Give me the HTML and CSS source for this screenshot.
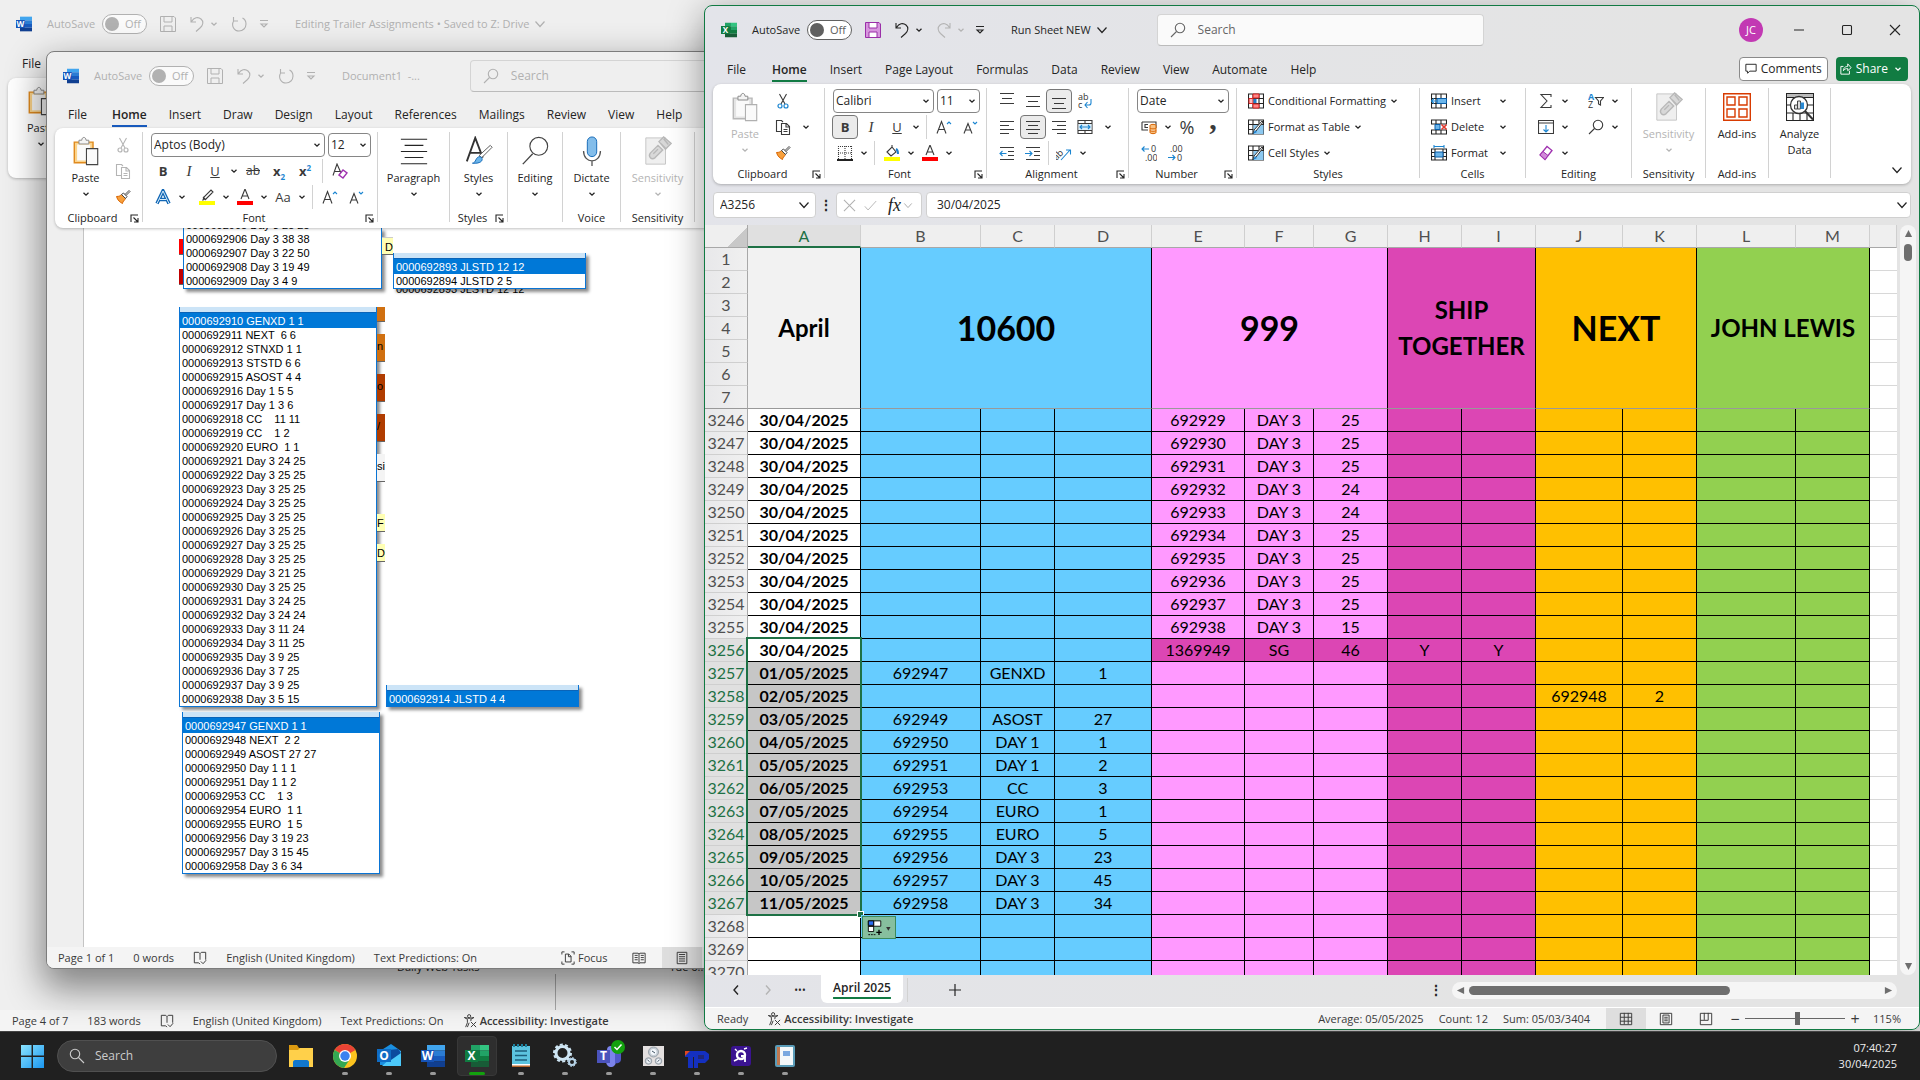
FILE: index.html
```html
<!DOCTYPE html>
<html lang="en">
<head>
<meta charset="utf-8">
<title>Run Sheet NEW - Excel</title>
<link rel="stylesheet" href="styles.css">
</head>
<body>
<svg class="sprite" aria-hidden="true">
<symbol id="chev" viewBox="0 0 8 8"><path d="M1.500 2.800 4 5.200 6.500 2.800" fill="none" stroke="currentColor" stroke-width="1.300"/></symbol>
<symbol id="bigchev" viewBox="0 0 12 12"><path d="M1.500 3.500 6 8.500 10.500 3.500" fill="none" stroke="currentColor" stroke-width="1.200"/></symbol>
<symbol id="prev" viewBox="0 0 12 12"><path d="M8 1.500 4 6l4 4.500" fill="none" stroke="currentColor" stroke-width="1.400"/></symbol>
<symbol id="next" viewBox="0 0 12 12"><path d="M4 1.500 8 6l-4 4.500" fill="none" stroke="currentColor" stroke-width="1.400"/></symbol>
<symbol id="add" viewBox="0 0 12 12"><path d="M6 0v12M0 6h12" fill="none" stroke="currentColor" stroke-width="1.200"/></symbol>
<symbol id="word" viewBox="0 0 24 24"><path d="M6 1h18v5.500H6z" fill="#41a5ee"/><path d="M6 6.500h18V12H6z" fill="#2b7cd3"/><path d="M6 12h18v5.500H6z" fill="#185abd"/><path d="M6 17.500h18V23H6z" fill="#103f91"/><path d="M0 6h13v12H0z" fill="#1654b8"/><text x="6.500" y="16" class="glyph">W</text></symbol>
<symbol id="excel" viewBox="0 0 24 24"><path d="M6 1h9v5.500H6z" fill="#21a366"/><path d="M15 1h9v5.500h-9z" fill="#33c481"/><path d="M6 6.500h9V12H6z" fill="#107c41"/><path d="M15 6.500h9V12h-9z" fill="#21a366"/><path d="M6 12h18v5.500H6z" fill="#107c41"/><path d="M6 17.500h18V23H6z" fill="#185c37"/><path d="M0 6h13v12H0z" fill="#107c41"/><text x="6.500" y="16" class="glyph">X</text></symbol>
<symbol id="save" viewBox="0 0 16 16"><path d="M.5.500h13.500L15.500 2v13.500H.5z" class="savefill"/><path d="M4 .500h8v5.500H4zM4 10h8v5.500H4z" class="savehole"/></symbol>
<symbol id="undo" viewBox="0 0 16 16"><path d="M2 1v5h5M2.500 5.500C5 1.500 9 .5 12 3s2 6-.5 8.500L7 15.500" class="ln"/></symbol>
<symbol id="redo" viewBox="0 0 16 16"><path d="M14 1v5H9M13.500 5.500C11 1.500 7 .5 4 3s-2 6 .5 8.500L9 15.500" class="ln"/></symbol>
<symbol id="repeat" viewBox="0 0 16 16"><path d="M2.500 1v4h4.500M2.800 4.800C-.2 9.500 3 15 8 15c4 0 7-3 7-7 0-2.500-1.500-5-3.500-6" class="ln"/></symbol>
<symbol id="cust" viewBox="0 0 10 10"><path d="M1 1.500h8M2 5l3 3 3-3z" class="ln"/></symbol>
<symbol id="search" viewBox="0 0 16 16"><circle cx="10" cy="6" r="4.700" class="ln"/><path d="M6.500 9.500 1 15" class="ln"/></symbol>
<symbol id="cut" viewBox="0 0 16 16"><path d="M4.500 1 10 11M11.500 1 6 11" class="ln"/><g fill="none" class="accent"><circle cx="5" cy="13" r="2"/><circle cx="11" cy="13" r="2"/></g></symbol>
<symbol id="copy" viewBox="0 0 16 16"><path d="M6 12.500H1.500V1.500h5L8 3M6.500 4.500h5l3 3v8h-8zM11 4.500v3.500h3.500M8.500 10.500h4M8.500 12.500h4" class="ln"/></symbol>
<symbol id="brush" viewBox="0 0 16 16"><path d="M1.500 7.500c3 0 4-1 5-2l4 4c-1 2-3 3-3 5-2-1-5-3-6-7z" fill="#f8a03c" stroke="#d86400"/><path d="M6.500 5.500l2-1.500 3.500 3.500-1.500 2zM10 5.500l4-4 1 1-4 4" fill="#fff" stroke="#444"/></symbol>
<symbol id="paste" viewBox="0 0 28 32"><path d="M1.500 6.500h20v22h-20z" class="pboard"/><path d="M4.500 9h14v17h-14z" fill="#fafafa"/><path d="M6.500 8.500v-4h3c0-4 4.500-4 4.500 0h3v4z" fill="#f4f4f4" stroke="#888"/><path d="M14.500 13.500h12v17h-12z" class="ppage"/></symbol>
<symbol id="launch" viewBox="0 0 9 9"><path d="M1 8V1h7M3.500 3.500 8 8M8 4v4H4" class="ln"/></symbol>
<symbol id="abottom" viewBox="0 0 16 16"><path d="M1 5.500h14M3 10.500h10M1 15.500h14" class="ln"/></symbol>
<symbol id="amid" viewBox="0 0 16 16"><path d="M1 3.500h14M3 8.500h10M1 13.500h14" class="ln"/></symbol>
<symbol id="atop" viewBox="0 0 16 16"><path d="M1 .5h14M3 5.500h10M1 10.500h14" class="ln"/></symbol>
<symbol id="aleft" viewBox="0 0 16 16"><path d="M1 2.500h14M1 6.500h9M1 10.500h14M1 14.500h9" class="ln"/></symbol>
<symbol id="acenter" viewBox="0 0 16 16"><path d="M1 2.500h14M3 6.500h10M1 10.500h14M3 14.500h10" class="ln"/></symbol>
<symbol id="aright" viewBox="0 0 16 16"><path d="M1 2.500h14M6 6.500h9M1 10.500h14M6 14.500h9" class="ln"/></symbol>
<symbol id="outd" viewBox="0 0 16 16"><path d="M1 2.500h14M9 6.500h6M9 10.500h6M1 14.500h14" class="ln"/><path d="M7.500 8.500H1M3.500 6 1 8.500 3.500 11" class="ln blue"/></symbol>
<symbol id="ind" viewBox="0 0 16 16"><path d="M1 2.500h14M9 6.500h6M9 10.500h6M1 14.500h14" class="ln"/><path d="M0 8.500h7M4.500 6 7 8.500 4.500 11" class="ln blue"/></symbol>
<symbol id="wrap" viewBox="0 0 16 16"><text x="1" y="7" class="mini">ab</text><text x="1" y="15" class="mini">c</text><path d="M14 6v4c0 1-1 2-2 2H8M10.500 9 8 12l2.500 3" class="ln blue"/></symbol>
<symbol id="merge" viewBox="0 0 16 16"><path d="M1 1.500h14v13H1zM1 4.500h14M1 11.500h14M8 1v3M8 12v3" class="ln"/><path d="M1.500 5h13v6h-13z" fill="#d9eefb"/><path d="M3 8h10M5 6 3 8l2 2M11 6l2 2-2 2" class="ln blue"/></symbol>
<symbol id="orient" viewBox="0 0 16 16"><text x="-4" y="11" transform="rotate(-45 4 8)" class="mini">ab</text><path d="M5 15 14 5M10 5h4.500v4.500" class="ln blue"/></symbol>
<symbol id="border" viewBox="0 0 16 16"><path d="M1 1.500h14M1.500 1v13M14.500 1v13M8 1v13M1 8h14" class="ln" stroke-dasharray="1 1"/><path d="M0 15h16" stroke="#222" stroke-width="2"/></symbol>
<symbol id="bucket" viewBox="0 0 16 16"><path d="M3 7l5-5 4 5-5 4zM8 2V0" class="ln"/><path d="M12 4c2 1 2 3 2 5" stroke="#1c7fcb" stroke-width="2" fill="none"/><path d="M0 12h16v4H0z" fill="#ff0"/></symbol>
<symbol id="pen" viewBox="0 0 16 16"><path d="M4 11l1-3 7-7 2 2-7 7zM4 8l3 3" class="ln"/><path d="M0 12h16v4H0z" fill="#ff0"/></symbol>
<symbol id="acolor" viewBox="0 0 16 16"><path d="M4 10 8 0l4 10M5.500 7h5" class="ln"/><path d="M0 12h16v4H0z" fill="red"/></symbol>
<symbol id="grow" viewBox="0 0 16 16"><path d="M1 14.500 5.500 2.500 10 14.500M2.500 10.500h6" class="ln"/><path d="m11 5 2-2 2 2" class="ln blue"/></symbol>
<symbol id="shrink" viewBox="0 0 16 16"><path d="M2 14.500 6 4.500l4 10M3.500 11h5" class="ln"/><path d="m11 3 2 2 2-2" class="ln blue"/></symbol>
<symbol id="clear" viewBox="0 0 16 16"><path d="M1 12.500 5 1l4 9M3 8.500h5" class="ln"/><path d="m7 12 4-5 4 3-4 5z" fill="#fff" stroke="#a033b0" stroke-width="1.400"/></symbol>
<symbol id="outlineA" viewBox="0 0 16 16"><path d="M2 14.500 8 2l6 12.500M4.500 10.500h7" fill="none" stroke="#1267b5" stroke-width="3.500"/><path d="M2 14.500 8 2l6 12.500M4.500 10.500h7" fill="none" stroke="#d9eefb" stroke-width="1"/></symbol>
<symbol id="money" viewBox="0 0 16 16"><path d="M1 3h14v6M1 3v8h6M7 5.500H4v3h3" class="ln"/><path d="M9 6.500c0-1.500 6-1.500 6 0v7c0 1.500-6 1.500-6 0zM9 9c0 1 6 1 6 0M9 11.500c0 1 6 1 6 0" fill="#f8c080" stroke="#d86400"/></symbol>
<symbol id="incdec" viewBox="0 0 16 16"><path d="M8 4H1M3.500 1.500 1 4l2.500 2.500" class="ln blue"/><text x="10" y="7" class="mini">0</text><text x="4" y="16" class="mini">.00</text></symbol>
<symbol id="decdec" viewBox="0 0 16 16"><path d="M1 12.500h7M5.500 10 8 12.500 5.500 15" class="ln blue"/><text x="3" y="7" class="mini">.00</text><text x="10" y="16" class="mini">0</text></symbol>
<symbol id="cf" viewBox="0 0 16 16"><path d="M.5 1h15v14H.5zM.5 5.500h15M.5 10.500h15M5 1v14M11 1v14" class="ln"/><path d="M5 1h6v4H5zM5 11h6v4H5z" fill="#f88" stroke="#d22"/><path d="M1 5.500h4v5H1z" fill="#fbb" stroke="#d22"/><path d="M5.500 6h3v4h-3z" fill="#1c7fcb"/></symbol>
<symbol id="ft" viewBox="0 0 16 16"><path d="M.5 1h15v14H.5zM.5 5.500h15M.5 10.500h8M5 1v14M11 1v5" class="ln"/><path d="M5.500 6h10v9h-10z" fill="#8cc8f0"/><path d="M15 3 8 12l-3 3 1-4 8-9z" fill="#fff" stroke="#333"/><path d="m5 15 2-4 2 2z" fill="#1c7fcb"/></symbol>
<symbol id="ins" viewBox="0 0 16 16"><path d="M.5 1h15v14H.5zM.5 5.500h15M.5 10.500h15M5 1v14M10 1v14" class="ln"/><path d="M6 5.500h9.500v5H6z" fill="#6bb5ea" stroke="#0a5ea8"/><path d="M6.500 8h-6M3 5.500.5 8 3 10.500" class="ln blue"/></symbol>
<symbol id="del" viewBox="0 0 16 16"><path d="M.5 1h15v4H.5zM.5 11h15v4H.5zM5 1v4M10 1v4M5 11v4M10 11v4" class="ln"/><path d="M4 5.500h5v5H4z" fill="#6bb5ea" stroke="#0a5ea8"/><path d="m10.500 5.500 5 5m0-5-5 5" stroke="#e03a30" stroke-width="1.600"/></symbol>
<symbol id="fmt" viewBox="0 0 16 16"><path d="M.5 4h15v11H.5zM.5 7.500h15M.5 11.500h15M4 4v11M12 4v11" class="ln"/><path d="M4 7h8v5H4z" fill="#6bb5ea" stroke="#0a5ea8"/><path d="M3 1.500h10M3 0v3M13 0v3" class="ln blue"/></symbol>
<symbol id="sigma" viewBox="0 0 16 16"><path d="M13 4V1.500H3L9 8l-6 6.500h10V12" class="ln"/></symbol>
<symbol id="filld" viewBox="0 0 16 16"><path d="M.5 1.500h15v13H.5zM.5 4h15" class="ln"/><path d="M8 6v7M5.500 10.500 8 13l2.500-2.500" class="ln blue"/></symbol>
<symbol id="eraser" viewBox="0 0 16 16"><path d="m2 10 7-8.500 5 4L7 14.500z" fill="#fff" stroke="#a033b0" stroke-width="1.300"/><path d="m2 10 3-3.500 5 4-3 4z" fill="#d08ad8" stroke="#a033b0"/></symbol>
<symbol id="sort" viewBox="0 0 16 16"><text x="0" y="7" class="mini az">A</text><text x="0" y="15" class="mini">Z</text><path d="M7.500 4.500h8L12.500 8v4l-2-1V8z" class="ln"/></symbol>
<symbol id="sens" viewBox="0 0 28 32"><path d="M1 2h21v28H1z" fill="#efefef" stroke="#c4c4c4"/><path d="m6 18 8-8 5 5-8 8c-4 3-8-1-5-5zM9 19l5-5M15 6l5-5 8 7-6 6zM17 8l5 5M20 3l5 6" fill="#d8d8d8" stroke="#b8b8b8" stroke-width="1.500"/></symbol>
<symbol id="addins" viewBox="0 0 28 28"><path d="M.7.700h26.600v26.600H.7zM4 4h8v8H4zM16 4h8v8h-8zM4 16h8v8H4zM16 16h8v8h-8z" fill="none" stroke="#d83b01" stroke-width="1.400"/></symbol>
<symbol id="analyze" viewBox="0 0 28 28"><path d="M.5.500h27v27H.5zM.5 4.500h27M.5 12h27M.5 20h27M7 20v8M14 20v8M21 20v8" class="ln"/><path d="M1 1h26v3H1z" fill="#bbb"/><circle cx="13" cy="12" r="8.500" fill="#fff" stroke="#333" stroke-width="1.300"/><path d="m19 18 8 8.500" stroke="#333" stroke-width="2"/><path d="M8.500 12h3v4h-3zM11.500 8h3v8h-3z" fill="#ddd" stroke="#444"/><path d="M14.500 9.500H18V16h-3.500z" fill="#2a8ad4"/></symbol>
<symbol id="para" viewBox="0 0 28 32"><path d="M0 3.500h28M4 10h20M0 16.500h28M4 23h20M0 29.500h28" class="ln"/></symbol>
<symbol id="styles" viewBox="0 0 28 32"><path d="M1 27 10 2l8 21M4 18h12" fill="none" stroke="#333" stroke-width="2"/><path d="M28 12 17 23l-3-2L26 10z" fill="#fff" stroke="#555"/><path d="M7 29c4 0 3-7 8-7 4 1 4 8-8 7z" fill="#6bb5ea" stroke="#1267b5"/></symbol>
<symbol id="find" viewBox="0 0 28 32"><circle cx="18" cy="11" r="9.500" fill="none" stroke="#444" stroke-width="1.200"/><path d="M11.500 19 1 30" stroke="#444" stroke-width="1.400"/></symbol>
<symbol id="mic" viewBox="0 0 28 32"><rect x="9" y="1" width="10" height="21" rx="5" fill="#83bdea" stroke="#1267b5"/><path d="M5 16c0 14 18 14 18 0M14 27v5" fill="none" stroke="#555" stroke-width="1.400"/></symbol>
<symbol id="book" viewBox="0 0 16 16"><path d="M8 3 6.500 1.500H1.500v12h5L8 15M8 3v7M8 3l1.500-1.500h5V10M9 12l2.500 2.500L15 10.500" class="ln"/></symbol>
<symbol id="acc" viewBox="0 0 16 16"><circle cx="7" cy="2.500" r="1.800" class="ln"/><path d="M1.500 4 5 6v4l-2 5M12.500 4 9 6v2M1.500 4 7 5l5.500-1M7 10l-2 5M9 9l6 6m0-6-6 6" class="ln"/></symbol>
<symbol id="focus" viewBox="0 0 16 16"><path d="M1 4V1h3M12 1h3v3M15 12v3h-3M4 15H1v-3M5 3.500h4L11.500 6v6.500H5zM8.500 3.500V6.500h3" class="ln"/></symbol>
<symbol id="read" viewBox="0 0 16 16"><path d="M1 2.500h6l1 1 1-1h6v11H9l-1 1-1-1H1zM8 3v11M3 5h3.500M3 7.500h3.500M3 10h3.500M10 5h3.500M10 7.500h3.500M10 10h3.500" class="ln"/></symbol>
<symbol id="page" viewBox="0 0 16 16"><path d="M2.500 1.500h11v13h-11zM4.500 4h7M4.500 6.500h7M4.500 9h7M4.500 11.500h7" class="ln"/></symbol>
<symbol id="gridv" viewBox="0 0 16 16"><path d="M1.500 1.500h13v13h-13zM1.500 6h13M1.500 10.500h13M6 1v13M10.500 1v13" class="ln"/></symbol>
<symbol id="pagev" viewBox="0 0 16 16"><path d="M1.500 1.500h13v13h-13zM4.500 3.500h7v9h-7zM6 6h4M6 8h4M6 10h4" class="ln"/></symbol>
<symbol id="breakv" viewBox="0 0 16 16"><path d="M1.500 1.500h13v13h-13zM6 1v8M1.500 9.500h9V1" class="ln"/></symbol>
<symbol id="tri" viewBox="0 0 10 10"><path d="m5 1 4 8H1z" fill="#6e6e6e"/></symbol>
<symbol id="comment" viewBox="0 0 14 14"><path d="M1 1.500h12v8H5.500L3 12V9.500H1z" class="ln"/></symbol>
<symbol id="share" viewBox="0 0 14 14"><path d="M4 4H1v9h10V9M4 9c0-4 3-5 5-5V1l4 4.500L9 9V6.500C7 6.500 5 7 4 9z" class="ln"/></symbol>
</svg>

<main class="desktop">

<section class="window word back">
  <header class="title">
    <svg class="app"><use href="#word"/></svg>
    <span class="auto">AutoSave</span><label class="toggle"><input type="checkbox" aria-label="AutoSave"><span>Off</span></label>
    <button class="q" aria-label="Save"><svg><use href="#save"/></svg></button><button class="q" aria-label="Undo"><svg><use href="#undo"/></svg></button><svg class="cv"><use href="#chev"/></svg><button class="q" aria-label="Repeat"><svg><use href="#repeat"/></svg></button><svg class="cust"><use href="#cust"/></svg>
    <span class="docname">Editing Trailer Assignments • Saved to Z: Drive</span><svg class="cv big"><use href="#bigchev"/></svg>
  </header>
  <nav class="tabs"><a href="#">File</a></nav>
  <div class="ribbon">
    <div class="group g88"><div class="body"><button class="large"><svg><use href="#paste"/></svg><span>Paste</span><svg class="cv"><use href="#chev"/></svg></button></div></div>
  </div>
  <div class="backdoc"><p><span>Daily Web Tasks</span><span>Tue 6..</span></p><div class="cells"><i></i></div></div>
  <footer class="status"><span>Page 4 of 7</span><span>183 words</span><svg><use href="#book"/></svg><span>English (United Kingdom)</span><span>Text Predictions: On</span><span class="access"><svg><use href="#acc"/></svg><b>Accessibility: Investigate</b></span></footer>
</section>

<section class="window word front">
  <header class="title">
    <svg class="app"><use href="#word"/></svg>
    <span class="auto">AutoSave</span><label class="toggle"><input type="checkbox" aria-label="AutoSave"><span>Off</span></label>
    <button class="q" aria-label="Save"><svg><use href="#save"/></svg></button><button class="q" aria-label="Undo"><svg><use href="#undo"/></svg></button><svg class="cv"><use href="#chev"/></svg><button class="q" aria-label="Repeat"><svg><use href="#repeat"/></svg></button><svg class="cust"><use href="#cust"/></svg>
    <span class="docname">Document1&nbsp; -...</span>
    <label class="searchbox"><svg><use href="#search"/></svg><input type="text" placeholder="Search" aria-label="Search"></label>
  </header>
  <nav class="tabs"><a href="#">File</a><a href="#" class="on">Home</a><a href="#">Insert</a><a href="#">Draw</a><a href="#">Design</a><a href="#">Layout</a><a href="#">References</a><a href="#">Mailings</a><a href="#">Review</a><a href="#">View</a><a href="#">Help</a></nav>
  <div class="ribbon">
    <div class="group g88"><div class="body"><button class="large"><svg><use href="#paste"/></svg><span>Paste</span><svg class="cv"><use href="#chev"/></svg></button>
      <div class="stack"><button class="i dim" aria-label="Cut"><svg><use href="#cut"/></svg></button><button class="i dim" aria-label="Copy"><svg><use href="#copy"/></svg></button><button class="i" aria-label="Format Painter"><svg><use href="#brush"/></svg></button></div></div>
      <div class="label launchable"><span>Clipboard</span><svg><use href="#launch"/></svg></div></div>
    <div class="group g235 pad"><div class="rows">
      <div class="row"><span class="combo w174"><select aria-label="Font"><option>Aptos (Body)</option></select><svg><use href="#chev"/></svg></span><span class="combo w43"><select aria-label="Font size"><option>12</option></select><svg><use href="#chev"/></svg></span></div>
      <div class="row"><button class="i"><b>B</b></button><button class="i"><em>I</em></button><button class="i"><u>U</u></button><svg class="cv"><use href="#chev"/></svg><button class="i"><s>ab</s></button><button class="i"><b>x<sub>2</sub></b></button><button class="i"><b>x<sup>2</sup></b></button><i class="sep"></i><button class="i" aria-label="Clear formatting"><svg><use href="#clear"/></svg></button></div>
      <div class="row"><button class="i" aria-label="Text effects"><svg><use href="#outlineA"/></svg></button><svg class="cv"><use href="#chev"/></svg><button class="i nudge" aria-label="Highlight"><svg><use href="#pen"/></svg></button><svg class="cv"><use href="#chev"/></svg><button class="i" aria-label="Font colour"><svg><use href="#acolor"/></svg></button><svg class="cv"><use href="#chev"/></svg><button class="i">Aa</button><svg class="cv"><use href="#chev"/></svg><i class="sep"></i><button class="i" aria-label="Grow font"><svg><use href="#grow"/></svg></button><button class="i" aria-label="Shrink font"><svg><use href="#shrink"/></svg></button></div></div>
      <div class="label launchable"><span>Font</span><svg><use href="#launch"/></svg></div></div>
    <div class="group g72"><div class="body"><button class="large"><svg><use href="#para"/></svg><span>Paragraph</span><svg class="cv"><use href="#chev"/></svg></button></div></div>
    <div class="group g58"><div class="body"><button class="large"><svg><use href="#styles"/></svg><span>Styles</span><svg class="cv"><use href="#chev"/></svg></button></div><div class="label launchable"><span>Styles</span><svg><use href="#launch"/></svg></div></div>
    <div class="group g55"><div class="body"><button class="large"><svg><use href="#find"/></svg><span>Editing</span><svg class="cv"><use href="#chev"/></svg></button></div></div>
    <div class="group g58"><div class="body"><button class="large"><svg><use href="#mic"/></svg><span>Dictate</span><svg class="cv"><use href="#chev"/></svg></button></div><div class="label">Voice</div></div>
    <div class="group g74"><div class="body"><button class="large dim" disabled><svg><use href="#sens"/></svg><span>Sensitivity</span><svg class="cv"><use href="#chev"/></svg></button></div><div class="label">Sensitivity</div></div>
  </div>
  <div class="document"><article class="sheetpage">
    <div class="line first">
      <div class="clip reds"><i></i><i></i></div>
      <ul class="list open"><li>0000692905 Day 3 25 25</li><li>0000692906 Day 3 38 38</li><li>0000692907 Day 3 22 50</li><li>0000692908 Day 3 19 49</li><li>0000692909 Day 3 4 9</li></ul>
      <div class="clip dtag"><i>D</i></div>
      <div class="beside"><ul class="list stub"><li class="sel">0000692893 JLSTD 12 12</li><li>0000692894 JLSTD 2 5</li></ul><p class="under">0000692893 JLSTD 12 12</p></div>
    </div>
    <div class="line second">
      <ul class="list stub"><li class="sel">0000692910 GENXD 1 1</li><li>0000692911 NEXT  6 6</li><li>0000692912 STNXD 1 1</li><li>0000692913 STSTD 6 6</li><li>0000692915 ASOST 4 4</li><li>0000692916 Day 1 5 5</li><li>0000692917 Day 1 3 6</li><li>0000692918 CC    11 11</li><li>0000692919 CC    1 2</li><li>0000692920 EURO  1 1</li><li>0000692921 Day 3 24 25</li><li>0000692922 Day 3 25 25</li><li>0000692923 Day 3 25 25</li><li>0000692924 Day 3 25 25</li><li>0000692925 Day 3 25 25</li><li>0000692926 Day 3 25 25</li><li>0000692927 Day 3 25 25</li><li>0000692928 Day 3 25 25</li><li>0000692929 Day 3 21 25</li><li>0000692930 Day 3 25 25</li><li>0000692931 Day 3 24 25</li><li>0000692932 Day 3 24 24</li><li>0000692933 Day 3 11 24</li><li>0000692934 Day 3 11 25</li><li>0000692935 Day 3 9 25</li><li>0000692936 Day 3 7 25</li><li>0000692937 Day 3 9 25</li><li>0000692938 Day 3 5 15</li></ul>
      <div class="clip strip"><i class="o1"></i><i class="o2">n</i><i class="o3">o</i><i class="o4">/</i><i class="o5">sit</i><i class="o6">F</i><i class="o7">D</i></div>
      <ul class="list stub last"><li class="sel">0000692914 JLSTD 4 4</li></ul>
    </div>
    <div class="line third">
      <ul class="list stub"><li class="sel">0000692947 GENXD 1 1</li><li>0000692948 NEXT  2 2</li><li>0000692949 ASOST 27 27</li><li>0000692950 Day 1 1 1</li><li>0000692951 Day 1 1 2</li><li>0000692953 CC    1 3</li><li>0000692954 EURO  1 1</li><li>0000692955 EURO  1 5</li><li>0000692956 Day 3 19 23</li><li>0000692957 Day 3 15 45</li><li>0000692958 Day 3 6 34</li></ul>
    </div>
  </article></div>
  <footer class="status"><span>Page 1 of 1</span><span>0 words</span><svg><use href="#book"/></svg><span>English (United Kingdom)</span><span>Text Predictions: On</span><span class="focus"><svg><use href="#focus"/></svg>Focus</span><button class="view" aria-label="Read mode"><svg><use href="#read"/></svg></button><button class="view on" aria-label="Print layout"><svg><use href="#page"/></svg></button></footer>
</section>

<section class="window xl">
  <header class="title">
    <svg class="app"><use href="#excel"/></svg>
    <span class="auto">AutoSave</span><label class="toggle"><input type="checkbox" aria-label="AutoSave"><span>Off</span></label>
    <button class="q purple" aria-label="Save"><svg><use href="#save"/></svg></button><button class="q" aria-label="Undo"><svg><use href="#undo"/></svg></button><svg class="cv"><use href="#chev"/></svg><button class="q dim" aria-label="Redo"><svg><use href="#redo"/></svg></button><svg class="cv dim"><use href="#chev"/></svg><svg class="cust"><use href="#cust"/></svg>
    <span class="docname">Run Sheet NEW</span><svg class="cv big"><use href="#bigchev"/></svg>
    <label class="searchbox"><svg><use href="#search"/></svg><input type="text" placeholder="Search" aria-label="Search"></label>
    <div class="winctl"><span class="avatar">JC</span><button aria-label="Minimise"><svg viewBox="0 0 12 12"><path d="M1 6h10" class="ln"/></svg></button><button aria-label="Maximise"><svg viewBox="0 0 12 12"><rect x="1.500" y="1.500" width="9" height="9" rx="1" class="ln"/></svg></button><button aria-label="Close"><svg viewBox="0 0 12 12"><path d="m1 1 10 10m0-10L1 11" class="ln"/></svg></button></div>
  </header>
  <nav class="tabs"><a href="#">File</a><a href="#" class="on">Home</a><a href="#">Insert</a><a href="#">Page Layout</a><a href="#">Formulas</a><a href="#">Data</a><a href="#">Review</a><a href="#">View</a><a href="#">Automate</a><a href="#">Help</a>
    <button class="comments"><svg><use href="#comment"/></svg>Comments</button><button class="share"><svg><use href="#share"/></svg>Share<svg class="cv"><use href="#chev"/></svg></button></nav>
  <div class="ribbon">
    <div class="group g112"><div class="body"><button class="large dim" disabled><svg><use href="#paste"/></svg><span>Paste</span><svg class="cv"><use href="#chev"/></svg></button>
      <div class="stack"><button class="i" aria-label="Cut"><svg><use href="#cut"/></svg></button><span class="pair"><button class="i" aria-label="Copy"><svg><use href="#copy"/></svg></button><svg class="cv"><use href="#chev"/></svg></span><button class="i" aria-label="Format Painter"><svg><use href="#brush"/></svg></button></div></div>
      <div class="label launchable"><span>Clipboard</span><svg><use href="#launch"/></svg></div></div>
    <div class="group g162 pad"><div class="rows">
      <div class="row"><span class="combo w101"><select aria-label="Font"><option>Calibri</option></select><svg><use href="#chev"/></svg></span><span class="combo w43"><select aria-label="Font size"><option>11</option></select><svg><use href="#chev"/></svg></span></div>
      <div class="row"><button class="i on"><b>B</b></button><button class="i"><em>I</em></button><button class="i"><u>U</u></button><svg class="cv"><use href="#chev"/></svg><i class="sep"></i><button class="i" aria-label="Grow font"><svg><use href="#grow"/></svg></button><button class="i" aria-label="Shrink font"><svg><use href="#shrink"/></svg></button></div>
      <div class="row"><button class="i" aria-label="Borders"><svg><use href="#border"/></svg></button><svg class="cv"><use href="#chev"/></svg><i class="sep"></i><button class="i" aria-label="Fill colour"><svg><use href="#bucket"/></svg></button><svg class="cv"><use href="#chev"/></svg><button class="i" aria-label="Font colour"><svg><use href="#acolor"/></svg></button><svg class="cv"><use href="#chev"/></svg></div></div>
      <div class="label launchable"><span>Font</span><svg><use href="#launch"/></svg></div></div>
    <div class="group g142 pad"><div class="rows">
      <div class="row"><button class="i" aria-label="Top align"><svg><use href="#atop"/></svg></button><button class="i" aria-label="Middle align"><svg><use href="#amid"/></svg></button><button class="i on" aria-label="Bottom align"><svg><use href="#abottom"/></svg></button><button class="i" aria-label="Wrap text"><svg><use href="#wrap"/></svg></button></div>
      <div class="row"><button class="i" aria-label="Left"><svg><use href="#aleft"/></svg></button><button class="i on" aria-label="Centre"><svg><use href="#acenter"/></svg></button><button class="i" aria-label="Right"><svg><use href="#aright"/></svg></button><button class="i" aria-label="Merge"><svg><use href="#merge"/></svg></button><svg class="cv nudge"><use href="#chev"/></svg></div>
      <div class="row"><button class="i" aria-label="Outdent"><svg><use href="#outd"/></svg></button><button class="i" aria-label="Indent"><svg><use href="#ind"/></svg></button><i class="sep tight"></i><button class="i" aria-label="Orientation"><svg><use href="#orient"/></svg></button><svg class="cv"><use href="#chev"/></svg></div></div>
      <div class="label launchable"><span>Alignment</span><svg><use href="#launch"/></svg></div></div>
    <div class="group g108 pad"><div class="rows">
      <div class="row"><span class="combo w92"><select aria-label="Number format"><option>Date</option></select><svg><use href="#chev"/></svg></span></div>
      <div class="row"><button class="i" aria-label="Currency"><svg><use href="#money"/></svg></button><svg class="cv"><use href="#chev"/></svg><button class="i pct">%</button><button class="i comma">,</button></div>
      <div class="row"><button class="i" aria-label="Increase decimal"><svg><use href="#incdec"/></svg></button><button class="i" aria-label="Decrease decimal"><svg><use href="#decdec"/></svg></button></div></div>
      <div class="label launchable"><span>Number</span><svg><use href="#launch"/></svg></div></div>
    <div class="group g183 pad"><div class="rows">
      <div class="row"><button class="t"><svg><use href="#cf"/></svg>Conditional Formatting<svg class="cv"><use href="#chev"/></svg></button></div>
      <div class="row"><button class="t"><svg><use href="#ft"/></svg>Format as Table<svg class="cv"><use href="#chev"/></svg></button></div>
      <div class="row"><button class="t"><svg><use href="#ft"/></svg>Cell Styles<svg class="cv"><use href="#chev"/></svg></button></div></div>
      <div class="label">Styles</div></div>
    <div class="group g106 pad"><div class="rows">
      <div class="row"><button class="t wide"><svg><use href="#ins"/></svg><span>Insert</span><svg class="cv"><use href="#chev"/></svg></button></div>
      <div class="row"><button class="t wide"><svg><use href="#del"/></svg><span>Delete</span><svg class="cv"><use href="#chev"/></svg></button></div>
      <div class="row"><button class="t wide"><svg><use href="#fmt"/></svg><span>Format</span><svg class="cv"><use href="#chev"/></svg></button></div></div>
      <div class="label">Cells</div></div>
    <div class="group g106 pad"><div class="rows">
      <div class="row"><button class="i" aria-label="AutoSum"><svg><use href="#sigma"/></svg></button><svg class="cv"><use href="#chev"/></svg><button class="i gap" aria-label="Sort and filter"><svg><use href="#sort"/></svg></button><svg class="cv"><use href="#chev"/></svg></div>
      <div class="row"><button class="i" aria-label="Fill"><svg><use href="#filld"/></svg></button><svg class="cv"><use href="#chev"/></svg><button class="i gap" aria-label="Find"><svg><use href="#search"/></svg></button><svg class="cv"><use href="#chev"/></svg></div>
      <div class="row"><button class="i" aria-label="Clear"><svg><use href="#eraser"/></svg></button><svg class="cv"><use href="#chev"/></svg></div></div>
      <div class="label">Editing</div></div>
    <div class="group g74"><div class="body"><button class="large dim" disabled><svg><use href="#sens"/></svg><span>Sensitivity</span><svg class="cv"><use href="#chev"/></svg></button></div><div class="label">Sensitivity</div></div>
    <div class="group g63"><div class="body"><button class="large"><svg><use href="#addins"/></svg><span>Add-ins</span></button></div><div class="label">Add-ins</div></div>
    <div class="group g62"><div class="body"><button class="large"><svg><use href="#analyze"/></svg><span>Analyze<br>Data</span></button></div></div>
    <button class="collapse" aria-label="Collapse ribbon"><svg class="cv big"><use href="#bigchev"/></svg></button>
  </div>
  <div class="formula">
    <label class="namebox"><input type="text" value="A3256" aria-label="Name box"><svg class="cv big"><use href="#bigchev"/></svg></label>
    <span class="dots">⋮</span>
    <div class="fx"><svg viewBox="0 0 14 14"><path d="m1 1 12 12m0-12L1 13" class="ln"/></svg><svg viewBox="0 0 16 14"><path d="m1 8 4 4.500L15 1.500" class="ln"/></svg><em>fx</em><svg class="cv big"><use href="#bigchev"/></svg></div>
    <label class="entry"><input type="text" value="30/04/2025" aria-label="Formula bar"><svg class="cv big"><use href="#bigchev"/></svg></label>
  </div>
  <div class="gridarea">
    <div class="gridwrap">
    <table>
      <colgroup><col class="c43"><col class="c113"><col class="c120"><col class="c74"><col class="c97"><col class="c93"><col class="c69"><col class="c74"><col class="c74"><col class="c74"><col class="c87"><col class="c74"><col class="c99"><col class="c74"><col></colgroup>
      <thead>
      <tr class="letters"><th class="corner"><th class="cur">A<th>B<th>C<th>D<th>E<th>F<th>G<th>H<th>I<th>J<th>K<th>L<th>M<th>
      <tr class="froz"><th>1<td rowspan="7" class="month">April<td rowspan="7" colspan="3" class="blue huge">10600<td rowspan="7" colspan="3" class="pink huge">999<td rowspan="7" colspan="2" class="mag">SHIP TOGETHER<td rowspan="7" colspan="2" class="ora huge">NEXT<td rowspan="7" colspan="2" class="grn">JOHN LEWIS<td class="blank">
      <tr class="froz"><th>2<td class="blank">
      <tr class="froz"><th>3<td class="blank">
      <tr class="froz"><th>4<td class="blank">
      <tr class="froz"><th>5<td class="blank">
      <tr class="froz"><th>6<td class="blank">
      <tr class="froz end"><th>7<td class="blank">
      </thead>
      <tbody>
      <tr><th>3246<td>30/04/2025<td><td><td><td>692929<td>DAY 3<td>25<td><td><td><td><td><td><td>
      <tr><th>3247<td>30/04/2025<td><td><td><td>692930<td>DAY 3<td>25<td><td><td><td><td><td><td>
      <tr><th>3248<td>30/04/2025<td><td><td><td>692931<td>DAY 3<td>25<td><td><td><td><td><td><td>
      <tr><th>3249<td>30/04/2025<td><td><td><td>692932<td>DAY 3<td>24<td><td><td><td><td><td><td>
      <tr><th>3250<td>30/04/2025<td><td><td><td>692933<td>DAY 3<td>24<td><td><td><td><td><td><td>
      <tr><th>3251<td>30/04/2025<td><td><td><td>692934<td>DAY 3<td>25<td><td><td><td><td><td><td>
      <tr><th>3252<td>30/04/2025<td><td><td><td>692935<td>DAY 3<td>25<td><td><td><td><td><td><td>
      <tr><th>3253<td>30/04/2025<td><td><td><td>692936<td>DAY 3<td>25<td><td><td><td><td><td><td>
      <tr><th>3254<td>30/04/2025<td><td><td><td>692937<td>DAY 3<td>25<td><td><td><td><td><td><td>
      <tr><th>3255<td>30/04/2025<td><td><td><td>692938<td>DAY 3<td>15<td><td><td><td><td><td><td>
      <tr class="pick lead"><th>3256<td>30/04/2025<i class="selection"></i><td><td><td><td>1369949<td>SG<td>46<td>Y<td>Y<td><td><td><td><td>
      <tr class="pick"><th>3257<td>01/05/2025<td>692947<td>GENXD<td>1<td><td><td><td><td><td><td><td><td><td>
      <tr class="pick"><th>3258<td>02/05/2025<td><td><td><td><td><td><td><td><td>692948<td>2<td><td><td>
      <tr class="pick"><th>3259<td>03/05/2025<td>692949<td>ASOST<td>27<td><td><td><td><td><td><td><td><td><td>
      <tr class="pick"><th>3260<td>04/05/2025<td>692950<td>DAY 1<td>1<td><td><td><td><td><td><td><td><td><td>
      <tr class="pick"><th>3261<td>05/05/2025<td>692951<td>DAY 1<td>2<td><td><td><td><td><td><td><td><td><td>
      <tr class="pick"><th>3262<td>06/05/2025<td>692953<td>CC<td>3<td><td><td><td><td><td><td><td><td><td>
      <tr class="pick"><th>3263<td>07/05/2025<td>692954<td>EURO<td>1<td><td><td><td><td><td><td><td><td><td>
      <tr class="pick"><th>3264<td>08/05/2025<td>692955<td>EURO<td>5<td><td><td><td><td><td><td><td><td><td>
      <tr class="pick"><th>3265<td>09/05/2025<td>692956<td>DAY 3<td>23<td><td><td><td><td><td><td><td><td><td>
      <tr class="pick"><th>3266<td>10/05/2025<td>692957<td>DAY 3<td>45<td><td><td><td><td><td><td><td><td><td>
      <tr class="pick"><th>3267<td>11/05/2025<td>692958<td>DAY 3<td>34<td><td><td><td><td><td><td><td><td><td>
      <tr><th>3268<td><td class="anchor"><button class="autofill" aria-label="Auto fill options"><svg viewBox="0 0 26 18"><path d="M1 1h14v6H1zM7 1v6M1 7v6h6V7z" fill="#fff" stroke="#000"/><path d="M1 1h6v5H1z" fill="#2a6cf0" stroke="#000"/><path d="M1 16.500h8" stroke="#000" stroke-dasharray="2 1"/><path d="M10 14h6M13 11v6" stroke="#000" stroke-width="1.500"/><path d="M21 8h5l-2.500 4z" fill="#333"/></svg></button><td><td><td><td><td><td><td><td><td><td><td><td>
      <tr><th>3269<td><td><td><td><td><td><td><td><td><td><td><td><td><td>
      <tr><th>3270<td><td><td><td><td><td><td><td><td><td><td><td><td><td>
      </tbody>
    </table>
    </div>
    <div class="vscroll"><svg><use href="#tri"/></svg><i></i><svg class="down"><use href="#tri"/></svg></div>
  </div>
  <div class="sheettabs"><button class="nav" aria-label="Previous sheet"><svg><use href="#prev"/></svg></button><button class="nav dim" aria-label="Next sheet"><svg><use href="#next"/></svg></button><button class="nav more">•••</button><button class="tab">April 2025</button><i class="sep"></i><button class="plus" aria-label="New sheet"><svg><use href="#add"/></svg></button>
    <span class="dots">⋮</span><div class="hscroll"><svg class="left"><use href="#tri"/></svg><i></i><svg class="right"><use href="#tri"/></svg></div></div>
  <footer class="status"><span>Ready</span><span class="access"><svg><use href="#acc"/></svg><b>Accessibility: Investigate</b></span><div class="sums"><span>Average: 05/05/2025</span><span>Count: 12</span><span>Sum: 05/03/3404</span></div>
    <div class="views"><button class="view on" aria-label="Normal"><svg><use href="#gridv"/></svg></button><button class="view" aria-label="Page layout"><svg><use href="#pagev"/></svg></button><button class="view" aria-label="Page break"><svg><use href="#breakv"/></svg></button></div>
    <div class="zoom"><button>−</button><input type="range" min="0" max="100" value="53" aria-label="Zoom"><button>+</button><span>115%</span></div></footer>
</section>
</main>

<footer class="taskbar">
  <button class="start" aria-label="Start"><svg viewBox="0 0 24 24"><defs><linearGradient id="win" x2="1" y2="1"><stop stop-color="#8ae4ff"/><stop offset="1" stop-color="#1a96f0"/></linearGradient></defs><path d="M0 0h11v11H0zM12.500 0H24v11H12.500zM0 12.500h11V24H0zM12.500 12.500H24V24H12.500z" fill="url(#win)"/></svg></button>
  <label class="tsearch"><svg><use href="#search"/></svg><input type="text" placeholder="Search" aria-label="Search"></label>
  <div class="apps">
    <button aria-label="File Explorer"><svg viewBox="0 0 24 24"><path d="M0 1h8l2 3h14v19H0z" fill="#dc9a10"/><path d="M0 6h9l2-2h13v19H0z" fill="#ffd04a"/><path d="M4 23v-5c0-1 1-2 2-2h12c1 0 2 1 2 2v5z" fill="#1277cc"/></svg></button>
    <button class="run" aria-label="Chrome"><svg viewBox="0 0 24 24"><circle cx="12" cy="12" r="12" fill="#fcc31e"/><path d="M12 12 1.600 6A12 12 0 0 1 22.400 6z" fill="#ea4335"/><path d="M12 12 1.600 6A12 12 0 0 0 11 24l6-9z" fill="#34a853"/><circle cx="12" cy="12" r="6" fill="#fff"/><circle cx="12" cy="12" r="4.700" fill="#3b82f0"/></svg></button>
    <button class="run" aria-label="Outlook"><svg viewBox="0 0 24 24"><path d="M3 7 14 0l10 7v14H3z" fill="#1a8fe0"/><path d="m14 14 10-7v15H5z" fill="#4cc9fa"/><path d="m12 6 9-1 3 4-10 7z" fill="#0c4a9e"/><path d="M0 5h14v13H0z" fill="#0f6cc4"/><text x="7" y="15.500" class="glyph">O</text></svg></button>
    <button class="run" aria-label="Word"><svg><use href="#word"/></svg></button>
    <button class="run active" aria-label="Excel"><svg><use href="#excel"/></svg></button>
    <button class="run" aria-label="Notepad"><svg viewBox="0 0 24 24"><path d="M3 19h18v4H3z" fill="#b8652a"/><path d="M3 2h18v18H3z" fill="#5cc4e0"/><path d="M3 20h18v1.500H3z" fill="#fff"/><path d="M6 7h12M6 11.500h12M6 16h12" stroke="#1c5f7c" stroke-width="1.500"/><path d="M5 0v3M9 0v3M13 0v3M17 0v3" stroke="#1c7f9c" stroke-width="2"/></svg></button>
    <button class="run" aria-label="Services"><svg viewBox="0 0 24 24"><circle cx="9.500" cy="9" r="6.500" fill="none" stroke="#cfe6f4" stroke-width="3"/><circle cx="9.500" cy="9" r="8.500" fill="none" stroke="#cfe6f4" stroke-width="2" stroke-dasharray="3 2.300"/><circle cx="19" cy="18" r="3" fill="none" stroke="#b8d4e8" stroke-width="2"/><circle cx="19" cy="18" r="4.300" fill="none" stroke="#b8d4e8" stroke-dasharray="2 1.300"/></svg></button>
    <button class="run" aria-label="Teams"><svg viewBox="0 0 24 24"><circle cx="14" cy="6" r="4" fill="#7b83eb"/><path d="M9 9h10v8c0 8-10 8-10 0z" fill="#7b83eb"/><path d="M18 9h6v6c0 4-4 5-6 4z" fill="#5059c9"/><path d="M0 6h13v13H0z" fill="#4b53bc"/><text x="6.500" y="16" class="glyph">T</text><circle cx="21" cy="3" r="7" fill="#13a10e"/><path d="m17.500 3 2.500 2.500 4.500-5" fill="none" stroke="#fff" stroke-width="1.500"/></svg></button>
    <button class="run" aria-label="Gauges"><svg viewBox="0 0 24 24"><path d="M2 2h21v20H2z" fill="#e4e0e0"/><g fill="#c4ccd4" stroke="#98a0a8"><circle cx="12.500" cy="8" r="5"/><circle cx="7.500" cy="17" r="3.300"/><circle cx="17.500" cy="17" r="3.300"/></g><g fill="#f4f8fc"><circle cx="12.500" cy="8" r="3"/><circle cx="7.500" cy="17" r="2"/><circle cx="17.500" cy="17" r="2"/></g><path d="m11 7 3 2M6.500 16l2 1.500M18.500 16l-2 1.500" stroke="#456"/></svg></button>
    <button class="run" aria-label="Planner"><svg viewBox="0 0 24 24"><path d="M5 7h15l4 3v5l-4 4h-7v5H9V13H8v11H3V13H0v-2z" fill="#1430c0"/><path d="M13 11h6v4h-6z" fill="#202878"/><path d="M0 7h5l-5 5z" fill="#e04820"/></svg></button>
    <button class="run" aria-label="Query"><svg viewBox="0 0 24 24"><rect x="2" y="2" width="20" height="20" rx="3" fill="#3a1390"/><circle cx="12" cy="11" r="4" fill="none" stroke="#fff" stroke-width="2.400"/><path d="M12 12h4v6" fill="none" stroke="#fff" stroke-width="1.800"/><path d="M5 17l4-2M6 5l2 2M15 5l3-1" stroke="#fff" stroke-width="1.400"/></svg></button>
    <button class="run" aria-label="Notes"><svg viewBox="0 0 24 24"><rect x="2" y="1" width="20" height="22" rx="2" fill="#5a9cb8"/><path d="M7 3h13v18H7z" fill="#f4f8fa"/><path d="M4 3h3v18H4z" fill="#c07850"/><path d="M10 7h7v5h-7z" fill="#7aa8e0"/></svg></button>
  </div>
  <div class="clock"><span>07:40:27</span><span>30/04/2025</span></div>
</footer>
</body>
</html>
```
FILE: styles.css
```css
* { box-sizing: border-box; }
body { margin: 0; height: 100vh; display: flex; flex-direction: column; overflow: hidden; font: 11px/16px "Open Sans", "Noto Sans", sans-serif; color: #242424; background: #1f1f1f; }
button { border: 0; padding: 0; margin: 0; background: none; font: inherit; color: inherit; }
input { font: inherit; color: inherit; }
svg { display: block; flex: none; overflow: visible; }
.sprite { position: absolute; width: 0; height: 0; }
a { color: inherit; text-decoration: none; }
.ln { fill: none; stroke: currentColor; stroke-width: 1.1; }
.blue { stroke: #1c86d1; }
.accent { stroke: var(--accent, #1c86d1); stroke-width: 1.200; }
.glyph { font: bold 12px "Open Sans", sans-serif; fill: #fff; text-anchor: middle; }
.mini { font: 9px "Open Sans", sans-serif; fill: #333; }
.az { fill: #1c86d1; font-weight: bold; }
.savefill { fill: var(--disk, none); stroke: currentColor; }
.savehole { fill: var(--hole, none); stroke: currentColor; }
.pboard { fill: var(--board, #fbd38a); stroke: var(--board-edge, #e08a1e); stroke-width: 1.500; }
.ppage { fill: #fafafa; stroke: var(--page-edge, #444); stroke-width: 1.200; }
.dim { color: #b4b4b4; --accent: #b4b4b4; --board: #e4e4e4; --board-edge: #b8b8b8; --page-edge: #b0b0b0; }
.purple { color: #9a2fa8; --disk: #d795de; --hole: #fff; }

.desktop { flex: 1; position: relative; overflow: hidden; background: #efefef; }
.window { position: absolute; isolation: isolate; display: flex; flex-direction: column; background: #efefef; overflow: hidden; }
.back { inset: 0; }
.front { left: 46px; top: 51px; width: 38vw; bottom: 62px; border: 1px solid #7c7c7c; border-radius: 8px; box-shadow: 0 16px 36px 4px rgba(0,0,0,.45); }
.xl { left: 704px; right: 0; top: 5px; bottom: 1px; border: 1px solid #117a43; border-radius: 8px; background: linear-gradient(100deg, #e3e4ea, #e4e4e4 70%); box-shadow: 0 8px 36px rgba(0,0,0,.4); }

.title { height: 48px; display: flex; align-items: center; flex: none; padding-left: 16px; }
.word .title { color: #b1b1b1; }
.app { width: 16px; height: 16px; }
.auto { width: 55px; margin-left: 15px; white-space: nowrap; }
.toggle { width: 45px; height: 20px; border: 1px solid currentColor; border-radius: 10px; background: #fff; display: flex; align-items: center; gap: 6px; padding-left: 2px; }
.word .toggle { background: #fafafa; }
.toggle input { appearance: none; width: 14px; height: 14px; border-radius: 7px; background: currentColor; margin: 0; }
.xl .toggle { color: #606060; }
.q { margin-left: 13px; }
.q svg { width: 16px; height: 16px; }
.cv { width: 8px; height: 8px; margin: 0 2px; }
.big { width: 12px; height: 12px; }
.title > .cv { margin-left: 5px; margin-right: 0; }
.cust { width: 10px; height: 10px; margin-left: 12px; }
.xl .cust { margin-left: 10px; }
.docname { margin-left: 26px; white-space: nowrap; }
.searchbox { display: flex; align-items: center; height: 32px; background: #fafafa; border: 1px solid #d4d4d4; border-bottom-color: #bbb; border-radius: 4px; gap: 12px; padding-left: 12px; color: #666; }
.searchbox svg { width: 16px; height: 16px; }
.searchbox input { border: 0; background: none; outline: 0; flex: 1; min-width: 0; padding: 0; font-size: 12px; }
input::placeholder { color: inherit; opacity: 1; }
.front .searchbox { background: #efefef; color: #b1b1b1; margin-left: 50px; flex: 1; margin-right: 16px; }
.xl .searchbox { width: 327px; margin-left: 49px; }
.winctl { margin-left: auto; display: flex; align-items: center; padding-right: 18px; gap: 36px; }
.winctl svg { width: 12px; height: 12px; }
.avatar { width: 24px; height: 24px; border-radius: 12px; background: #c239b3; color: #fff; text-align: center; line-height: 24px; margin-right: -6px; }

.tabs { height: 30px; flex: none; display: flex; align-items: center; gap: 20px; padding-left: 20px; font-size: 12px; }
.tabs a { line-height: 20px; padding-top: 4px; border-bottom: 2px solid transparent; white-space: nowrap; }
.tabs .on { font-weight: 600; border-color: #185abd; margin-left: 3px; }
.xl .tabs .on { border-color: #117a43; }
.xl .tabs { padding: 0 11px 0 22px; gap: 23px; }
.comments, .share { display: flex; align-items: center; height: 24px; border-radius: 4px; }
.comments { margin-left: auto; border: 1px solid #8a8a8a; background: #fff; gap: 4px; padding: 0 5px; }
.comments svg, .share svg { width: 12px; height: 12px; }
.share { background: #117c42; color: #fff; gap: 4px; padding: 0 4px; margin-left: -15px; }
.share .cv { width: 8px; height: 8px; }

.ribbon { height: 100px; flex: none; margin: 0 8px; background: #fff; border-radius: 8px; display: flex; padding-top: 4px; box-shadow: 0 1px 3px rgba(0,0,0,.25); z-index: 1; }
.group { height: 90px; border-right: 1px solid #d2d2d2; display: flex; flex-direction: column; flex: none; }
.rows, .body { height: 78px; flex: none; }
.body { display: flex; justify-content: center; }
.row { height: 26px; display: flex; align-items: center; }
.pad .rows { padding-left: 7px; }
.label { line-height: 16px; height: 16px; flex: none; text-align: center; }
.launchable { display: flex; align-items: center; padding-right: 3px; }
.launchable span { flex: 1; }
.launchable svg { width: 9px; height: 9px; }
.g55 { width: 55px; } .g58 { width: 58px; } .g62 { width: 62px; } .g63 { width: 63px; } .g72 { width: 72px; } .g74 { width: 74px; } .g88 { width: 88px; }
.g106 { width: 106px; } .g108 { width: 108px; } .g112 { width: 112px; } .g142 { width: 142px; } .g162 { width: 162px; } .g183 { width: 183px; } .g235 { width: 235px; }
.i { width: 26px; height: 24px; display: flex; align-items: center; justify-content: center; font-size: 13px; color: #3a3a3a; flex: none; }
.i.dim { color: #b4b4b4; }
.i svg { width: 16px; height: 16px; }
.i.on { border: 1px solid #777; border-radius: 4px; background: #ebebeb; }
.i em { font-family: "Liberation Serif", serif; font-size: 15px; }
.i s { font-size: 12px; }
.i sub, .i sup { font-size: 8px; line-height: 0; color: #1c86d1; }
.pct { font-size: 18px; }
.comma { font: bold 30px/12px "Liberation Serif", serif; padding-bottom: 16px; }
.nudge { margin-left: 6px; }
.gap { margin-left: 12px; }
.sep { width: 1px; height: 24px; background: #d2d2d2; margin: 0 4px; }
.tight { margin: 0 2px; }
.large { display: flex; flex-direction: column; align-items: center; width: 48px; padding-top: 4px; font-size: 11px; gap: 4px; white-space: nowrap; }
.large > svg:first-child { width: 28px; height: 30px; }
.large span { line-height: 16px; }
.g112 .body { justify-content: flex-start; padding-left: 8px; }
.g112 .stack { margin-left: 1px; }
.back .body { justify-content: flex-start; padding-left: 9px; }
.stack { display: flex; flex-direction: column; width: 26px; }
.stack .i { height: 26px; }
.pair { display: flex; align-items: center; }
.pair .cv { margin-left: 6px; }
.t { display: flex; align-items: center; white-space: nowrap; }
.t svg:first-child { width: 16px; height: 16px; margin: 0 4px; }
.t .cv { margin-left: 4px; }
.wide span { min-width: 44px; text-align: left; }
.combo { display: grid; height: 24px; border: 1px solid #868686; border-radius: 4px; background: #fff; margin-right: 2px; align-items: center; margin-left: 1px; }
.combo select { grid-area: 1/1; appearance: none; border: 0; background: none; font: 12px/20px "Open Sans", sans-serif; color: #242424; padding: 0 2px; }
.combo svg { grid-area: 1/1; justify-self: end; width: 8px; height: 8px; margin-right: 3px; }
.w174 { width: 174px; } .w101 { width: 101px; } .w92 { width: 92px; } .w43 { width: 43px; }
.collapse { margin-left: auto; align-self: end; padding: 0 6px 8px 0; }

.status { height: 21px; flex: none; display: flex; align-items: center; background: #f4f4f4; color: #3a3a3a; padding-left: 12px; white-space: nowrap; z-index: 1; }
.status svg { width: 14px; height: 14px; }
.status > * + * { margin-left: 19px; }
.access { display: flex; align-items: center; gap: 3px; }
.access b { font-weight: 600; }

/* rear document */
.back .ribbon { margin-right: 0; }
.back .tabs { padding-left: 22px; }
.backdoc { flex: 1; display: flex; flex-direction: column; justify-content: flex-end; }
.backdoc p { margin: 0; display: flex; padding-left: 397px; height: 10px; line-height: 6px; gap: 190px; }
.cells { height: 36px; display: flex; }
.cells i { border-right: 1px solid #aaa; width: 556px; }

/* front document */
.front .title { height: 47px; }
.front .tabs { height: 29px; padding-left: 21px; gap: 22px; }
.front .status { padding-left: 11px; }
.document { flex: 1; min-height: 0; padding-left: 36px; overflow: hidden; }
.sheetpage { background: #fff; border-left: 1px solid #c4c4c4; height: 100%; padding-left: 95px; font: 11px/14px "Liberation Sans", Arial, sans-serif; color: #000; }
.line { display: flex; }
.list { list-style: none; margin: 0; padding: 0; border: 1px solid #0a74d4; border-top: 0; width: 198px; background: #fff; box-shadow: 3px 3px 3px rgba(0,0,0,.45); flex: none; }
.list li { height: 14px; padding-left: 2px; white-space: pre; }
.stub::before { content: ""; display: block; height: 5px; background: #cce4f7; border-bottom: 1px solid #0a64b8; }
.list .sel { background: #0078d7; color: #fff; height: 15px; line-height: 16px; }
.first { height: 79px; }
.first .open { height: 61px; margin-left: -1px; width: 199px; display: flex; flex-direction: column; justify-content: flex-end; }
.open li { flex: none; }
.clip { overflow: hidden; flex: none; }
.clip i { display: block; font-style: normal; border-bottom: 1px solid #666; }
.reds { width: 5px; padding-top: 11px; }
.reds i { height: 16px; background: #f00; margin-bottom: 14px; }
.reds i + i { background: #c00000; }
.dtag { width: 11px; padding-top: 9px; }
.dtag i { background: #ffffb4; height: 18px; line-height: 18px; padding-left: 3px; border-top: 1px solid #ccc; }
.beside { padding-top: 25px; }
.beside .list { width: 193px; }
.under { margin: 0; height: 5px; overflow: hidden; line-height: 0; padding-left: 3px; }
.strip { width: 8px; line-height: 24px; }
.strip i { height: 28px; margin-bottom: 12px; }
.strip .o1 { height: 15px; background: #d07010; }
.strip .o2 { background: #d07010; }
.strip .o3, .strip .o4 { background: #b03c00; }
.strip .o5 { background: #f4f4f4; }
.strip .o6, .strip .o7 { background: #ffffb4; height: 18px; line-height: 18px; }
.strip .o6 { margin-top: 32px; }
.second .last { align-self: flex-end; width: 193px; margin-left: 1px; }
.third { margin: 5px 0 0 3px; }

/* spreadsheet */
.formula { display: flex; align-items: center; margin: 8px 8px 7px; height: 26px; flex: none; font-size: 12px; }
.formula label, .fx { height: 26px; background: #fff; border: 1px solid #d0d0d0; border-radius: 4px; display: flex; align-items: center; }
.formula input { border: 0; outline: 0; min-width: 0; flex: 1; padding: 0; background: none; }
.namebox { width: 103px; padding-left: 6px; }
.namebox .cv { margin-right: 5px; }
.dots { width: 20px; text-align: center; font-weight: bold; font-size: 14px; }
.fx { width: 86px; gap: 8px; padding-left: 6px; color: #b0b0b0; }
.fx svg { width: 13px; height: 13px; }
.fx em { font: italic 18px "Liberation Serif", serif; color: #222; margin-left: 3px; }
.fx .cv { width: 10px; margin: 0 0 0 -6px; }
.entry { flex: 1; margin-left: 4px; padding-left: 10px; }
.gridarea { flex: 1; min-height: 0; display: flex; }
.gridwrap { flex: 1; overflow: hidden; background: #fff; }
table { width: 100%; table-layout: fixed; border-collapse: separate; border-spacing: 0; font: 16px/20px Lato, "Open Sans", sans-serif; color: #000; }
.c43 { width: 43px; } .c69 { width: 69px; } .c74 { width: 74px; } .c87 { width: 87px; } .c93 { width: 93px; } .c97 { width: 97px; } .c99 { width: 99px; } .c113 { width: 113px; } .c120 { width: 120px; }
th, td { height: 23px; padding: 0; text-align: center; white-space: nowrap; border: 0 solid #000; border-width: 0 1px 1px 0; line-height: 20px; }
th { font-weight: normal; color: #505050; background: linear-gradient(90deg, #e8e8ea, #f0f0f0); border-color: #cfcfcf; }
th:first-child { border-right-color: #a8a8a8; }
.letters th { background: #efefef; border-bottom-color: #a8a8a8; }
.letters .cur { background: #e0e0e0; color: #1e7145; border-bottom: 2px solid #1e7145; }
.letters .corner { background: linear-gradient(135deg, #efefef 70%, #c8c8c8 70%); }
.froz td { font-size: 24px; line-height: 36px; font-weight: bold; white-space: normal; border-bottom-color: #999; }
.froz .huge { font-size: 34px; }
.froz .month { background: #f2f2f2; }
.froz.end th { border-bottom-color: #999; }
td.blank, tbody td:nth-child(15) { border-color: #d8d8d8; border-right: 0; background: #fff; }
.blue, tbody td:nth-child(n+3) { background: #66ccff; }
.pink, tbody td:nth-child(n+6) { background: #ff99ff; }
.mag, tbody td:nth-child(n+9) { background: #dc46b4; }
.ora, tbody td:nth-child(n+11) { background: #ffc000; }
.grn, tbody td:nth-child(n+13) { background: #92d050; }
tbody td:nth-child(15) { background: #fff; }
tbody td:nth-child(2) { font-weight: bold; background: #fff; }
.lead td:nth-child(n+6):nth-child(-n+8) { background: #dc46b4; }
tbody .pick td:nth-child(2) { background: #c6c6c6; }
tbody .lead td:nth-child(2) { background: #fff; position: relative; }
.pick th { color: #1e7145; background: #e0e0e0; }
.selection { position: absolute; left: -2px; top: -2px; width: 116px; height: 279px; border: 2px solid #1e7145; }
.selection::after { content: ""; position: absolute; right: -3px; bottom: -3px; width: 5px; height: 5px; background: #1e7145; outline: 1px solid #fff; }
.anchor { position: relative; }
.autofill { position: absolute; left: 1px; top: 1px; width: 34px; height: 23px; background: #86bf9e; border: 1px solid #3c8a5c; z-index: 1; display: flex; align-items: center; justify-content: center; }
.autofill svg { width: 26px; height: 16px; }
.vscroll { width: 16px; margin: 0 3px; background: #f5f5f5; border-radius: 8px; display: flex; flex-direction: column; align-items: center; padding: 4px 0; }
.vscroll svg, .hscroll svg { width: 9px; height: 9px; }
.vscroll i { width: 8px; height: 17px; border-radius: 4px; background: #6e6e6e; margin-top: 6px; }
.down { margin-top: auto; transform: rotate(180deg); }
.left { transform: rotate(-90deg); } .right { transform: rotate(90deg); margin-left: auto; }
.sheettabs { height: 33px; flex: none; display: flex; align-items: center; padding: 0 22px 2px 15px; border-bottom: 1px solid #fff; }
.nav { width: 32px; height: 28px; display: grid; place-items: center; }
.nav svg { width: 12px; height: 12px; }
.more { font-size: 10px; }
.tab { background: #fff; height: 28px; align-self: flex-start; border-radius: 0 0 6px 6px; width: 82px; font-size: 12px; line-height: 20px; font-weight: 600; margin-left: 5px; padding-bottom: 2px; text-decoration: underline #117a43 2px; text-underline-offset: 5px; white-space: nowrap; }
.plus { margin-left: 37px; }
.plus svg { width: 12px; height: 12px; }
.sheettabs .dots { margin-left: auto; margin-right: 6px; }
.hscroll { width: 445px; height: 17px; border-radius: 9px; background: #f5f5f5; display: flex; align-items: center; padding: 0 4px; }
.hscroll i { width: 261px; height: 9px; border-radius: 5px; background: #6e6e6e; margin-left: 4px; }
.xl .status { padding: 0 18px 0 12px; border-radius: 0 0 8px 8px; }
.status > .sums { display: flex; gap: 15px; margin-left: auto; }
.focus { display: flex; align-items: center; gap: 3px; padding-left: 65px; }
.view { width: 40px; height: 21px; display: grid; place-items: center; }
.view.on { background: #dedede; }
.front .view { margin-left: 18px; width: 26px; }
.front .view.on { width: 40px; margin-left: 10px; }
.views { display: flex; }
.status > .views { margin-left: 16px; }
.status > .zoom { margin-left: 3px; }
.zoom { display: flex; align-items: center; gap: 4px; }
.zoom button { width: 12px; font-size: 16px; }
.zoom span { margin-left: 8px; }
.zoom input { appearance: none; width: 100px; height: 13px; margin: 0; background: linear-gradient(#666, #666) center/100% 1px no-repeat; }
.zoom input::-webkit-slider-thumb { appearance: none; width: 5px; height: 13px; background: #666; }

.taskbar { height: 49px; flex: none; background: #202020; border-top: 1px solid #444; display: flex; align-items: center; padding: 0 23px 0 21px; color: #eee; }
.start svg { width: 23px; height: 23px; }
.tsearch { width: 220px; height: 32px; border-radius: 16px; background: #3e3e3e; border: 1px solid #505050; display: flex; align-items: center; gap: 10px; padding-left: 11px; margin-left: 13px; color: #ccc; }
.tsearch svg { width: 16px; height: 16px; transform: scaleX(-1); }
.tsearch input { width: 120px; border: 0; background: none; font-size: 12px; outline: 0; padding: 0; }
.apps { display: flex; gap: 4px; margin-left: 4px; height: 40px; }
.apps button { width: 40px; height: 40px; border-radius: 4px; display: flex; flex-direction: column; align-items: center; padding-top: 8px; gap: 4px; }
.apps svg { width: 24px; height: 24px; }
.run::after { content: ""; width: 6px; height: 3px; border-radius: 2px; background: #999; }
.apps .active { background: #2e2e2e; border: 1px solid #383838; padding-top: 7px; }
.active::after { width: 16px; background: #13a10e; }
.clock { margin-left: auto; display: flex; flex-direction: column; text-align: right; }
```
